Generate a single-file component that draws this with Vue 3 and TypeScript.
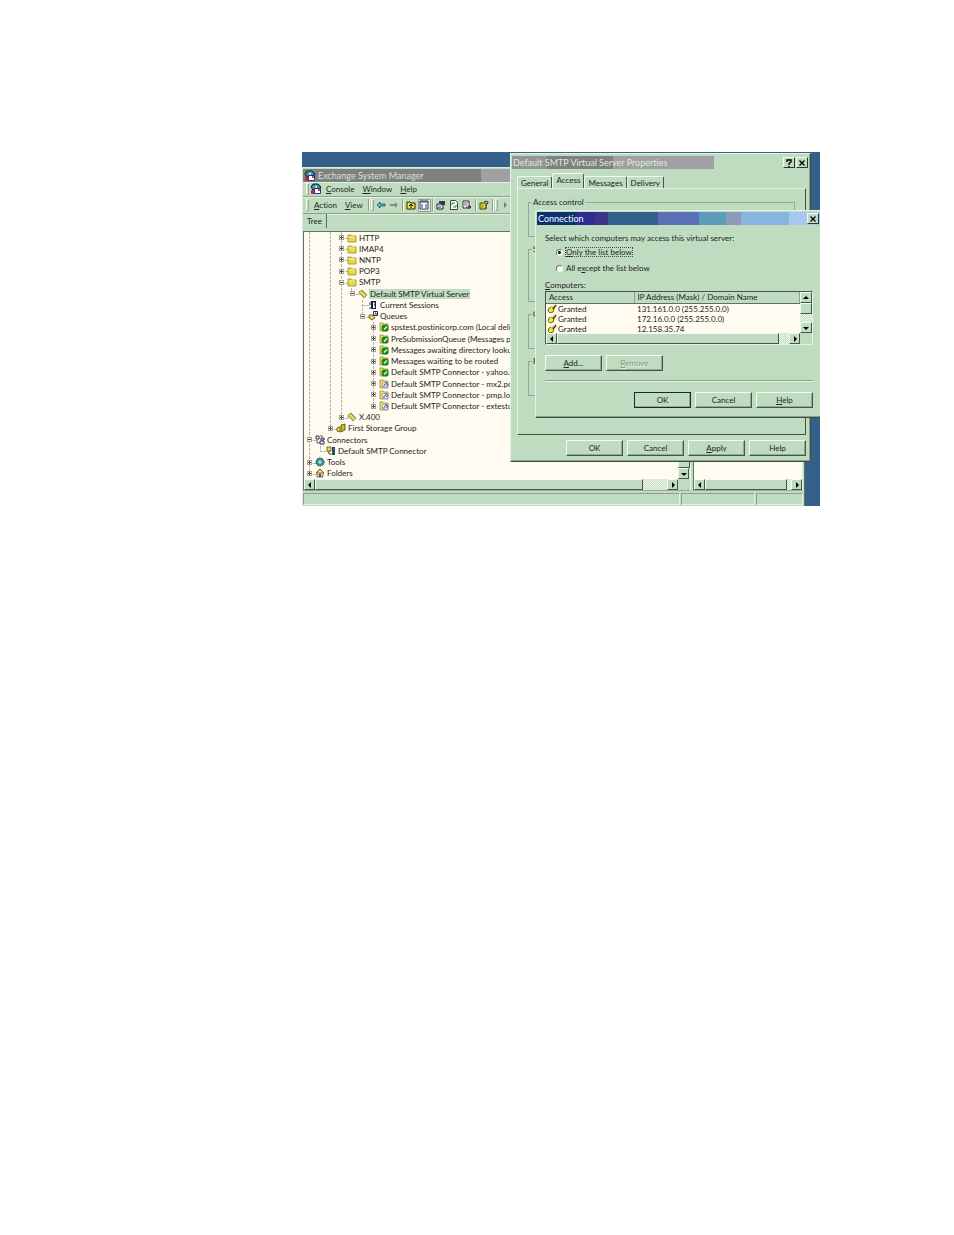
<script setup lang="ts">
import { ref } from 'vue'

type Toggle = 'plus' | 'minus' | ''
interface TreeNode {
  label: string
  level: number
  toggle: Toggle
  icon: string
  selected?: boolean
}

const nodes: TreeNode[] = [
  { label: 'HTTP', level: 3, toggle: 'plus', icon: 'folder' },
  { label: 'IMAP4', level: 3, toggle: 'plus', icon: 'folder' },
  { label: 'NNTP', level: 3, toggle: 'plus', icon: 'folder' },
  { label: 'POP3', level: 3, toggle: 'plus', icon: 'folder' },
  { label: 'SMTP', level: 3, toggle: 'minus', icon: 'folder' },
  { label: 'Default SMTP Virtual Server', level: 4, toggle: 'minus', icon: 'server', selected: true },
  { label: 'Current Sessions', level: 5, toggle: '', icon: 'session' },
  { label: 'Queues', level: 5, toggle: 'minus', icon: 'queues' },
  { label: 'spstest.postinicorp.com (Local delivery)', level: 6, toggle: 'plus', icon: 'queue-ok' },
  { label: 'PreSubmissionQueue (Messages pending)', level: 6, toggle: 'plus', icon: 'queue-ok' },
  { label: 'Messages awaiting directory lookup', level: 6, toggle: 'plus', icon: 'queue-ok' },
  { label: 'Messages waiting to be routed', level: 6, toggle: 'plus', icon: 'queue-ok' },
  { label: 'Default SMTP Connector - yahoo.com', level: 6, toggle: 'plus', icon: 'queue-ok' },
  { label: 'Default SMTP Connector - mx2.postini.com', level: 6, toggle: 'plus', icon: 'queue-retry' },
  { label: 'Default SMTP Connector - pmp.local', level: 6, toggle: 'plus', icon: 'queue-retry' },
  { label: 'Default SMTP Connector - extestuite', level: 6, toggle: 'plus', icon: 'queue-retry' },
  { label: 'X.400', level: 3, toggle: 'plus', icon: 'server' },
  { label: 'First Storage Group', level: 2, toggle: 'plus', icon: 'storage' },
  { label: 'Connectors', level: 0, toggle: 'minus', icon: 'connectors' },
  { label: 'Default SMTP Connector', level: 1, toggle: '', icon: 'connector' },
  { label: 'Tools', level: 0, toggle: 'plus', icon: 'tools' },
  { label: 'Folders', level: 0, toggle: 'plus', icon: 'home' },
]

const indent = (level: number) => ({ paddingLeft: `${2 + Math.round((level * 32) / 3)}px` })

const tabs = ['General', 'Access', 'Messages', 'Delivery']
const activeTab = ref('Access')
const mode = ref('only')

const rules = [
  { access: 'Granted', address: '131.161.0.0 (255.255.0.0)' },
  { access: 'Granted', address: '172.16.0.0 (255.255.0.0)' },
  { access: 'Granted', address: '12.158.35.74' },
]
</script>

<template>
  <svg class="sprites" aria-hidden="true">
    <symbol id="i-folder" viewBox="0 0 10 10">
      <path d="M1 3V2h3l1 1h4v6H1z" fill="#e8d848" stroke="#98903c" stroke-width=".8" />
      <path d="M2 4h6" stroke="#fff890" />
    </symbol>
    <symbol id="i-server" viewBox="0 0 10 10">
      <path d="M1 3l3-2 5 5-3 3z" fill="#e8d860" stroke="#807838" stroke-width=".8" />
      <path d="M0 5h3l3 3M4 2l4 4" fill="none" stroke="#98947c" stroke-width=".8" />
    </symbol>
    <symbol id="i-session" viewBox="0 0 10 10">
      <path d="M3 1h5v8H3z" fill="#181840" />
      <path d="M5 2l2 1-1 2 1 1v2H5z" fill="#fff" />
      <path d="M2 2v3M1 8h3" stroke="#303878" />
    </symbol>
    <symbol id="i-queues" viewBox="0 0 10 10">
      <path d="M5.500.5h4v4h-4z" fill="#fff" stroke="#202070" />
      <path d="M1 4h4l2 3-3 2-3-2z" fill="#e0d450" stroke="#50501c" stroke-width=".8" />
      <path d="M7 2h1v2" stroke="#202070" fill="none" />
    </symbol>
    <symbol id="i-queue-ok" viewBox="0 0 10 10">
      <path d="M1 3V1h3l1 1h4v7H1z" fill="#ecdc58" stroke="#98903c" stroke-width=".8" />
      <path d="M4 3h4l1 1v4l-1 1H4L3 8V4z" fill="#189020" stroke="#106818" stroke-width=".6" />
      <path d="M5 7.500l3-3" stroke="#e8ffe0" stroke-width="1.200" />
    </symbol>
    <symbol id="i-queue-retry" viewBox="0 0 10 10">
      <path d="M1 3V1h3l1 1h4v7H1z" fill="#ecdc58" stroke="#98903c" stroke-width=".8" />
      <path d="M3.500 3.500h5v5h-5z" fill="#fff" stroke="#a0a4b8" />
      <path d="M5 8V6l2-1V3.500L9 5.500 7 7" fill="none" stroke="#2838b8" stroke-width=".9" />
    </symbol>
    <symbol id="i-storage" viewBox="0 0 10 10">
      <path d="M1 5l3-1v5l-3-1z" fill="#f0e838" stroke="#484810" stroke-width=".8" />
      <path d="M5 2l4-1v6l-4 2z" fill="#c8bc20" stroke="#484810" stroke-width=".8" />
    </symbol>
    <symbol id="i-connectors" viewBox="0 0 10 10">
      <path d="M1 1h3v3H1zM6 3h3v2H6zM5 6h4v3H5z" fill="#fff" stroke="#282848" />
      <path d="M2 5v3h3M5 1h3" fill="none" stroke="#904080" />
    </symbol>
    <symbol id="i-connector" viewBox="0 0 10 10">
      <path d="M1 1h4v4H1z" fill="#f0e040" stroke="#505010" stroke-width=".8" />
      <path d="M6 1h3v8H6z" fill="#304878" />
      <path d="M2 6l3 3M7 3h1" stroke="#308888" />
      <path d="M3 5v3h3" fill="none" stroke="#807818" />
    </symbol>
    <symbol id="i-tools" viewBox="0 0 10 10">
      <circle cx="5" cy="5" r="4" fill="#389098" stroke="#183840" stroke-dasharray="1.500 1" />
      <path d="M5 3v4M3 5h4" stroke="#c8f0f0" />
    </symbol>
    <symbol id="i-home" viewBox="0 0 10 10">
      <path d="M1 5l4-4 4 4" fill="#f0e480" stroke="#584838" />
      <path d="M2 5h6v4H2z" fill="#e8d8b0" stroke="#605038" stroke-width=".8" />
      <path d="M4 6h2v3H4z" fill="#684858" />
    </symbol>
    <symbol id="i-app" viewBox="0 0 12 12">
      <path d="M3 1h5l3 3-2 3H3L1 4z" fill="#289090" stroke="#102838" />
      <path d="M4 4l3-2v3z" fill="#e8e8d0" />
      <path d="M1 7h4v4H1z" fill="#b03048" />
      <path d="M4.500 5.500h6v5h-6z" fill="#fff" stroke="#283098" />
      <path d="M8 6h2v2H8z" fill="#d04050" />
    </symbol>
    <symbol id="i-key" viewBox="0 0 10 10">
      <path d="M2 4l3-1 2 2-1 3-3 1-2-2z" fill="#f0e838" stroke="#484810" stroke-width=".8" />
      <path d="M6 5l3-4" stroke="#302c10" stroke-width="1.500" />
      <path d="M4 4l4-3" stroke="#e8d830" stroke-width="1.500" />
    </symbol>
    <symbol id="i-up" viewBox="0 0 10 10">
      <path d="M1 2h3l1 1h4v6H1z" fill="#f0e040" stroke="#282808" />
      <path d="M5 8V4M3 6l2-2 2 2" fill="none" stroke="#101010" />
    </symbol>
    <symbol id="i-pane" viewBox="0 0 10 10">
      <path d="M1 1h8v8H1z" fill="#fff" stroke="#303070" />
      <path d="M1 2h8M2 5h2M2 7h2M6 5h2M6 7h2" stroke="#303070" />
    </symbol>
    <symbol id="i-props" viewBox="0 0 10 10">
      <path d="M1 4h6v5H1z" fill="#fff" stroke="#202020" />
      <path d="M3 1h6v4H6L3 3z" fill="#303860" />
      <path d="M2 6h4M2 7.500h3" stroke="#606060" stroke-width=".8" />
    </symbol>
    <symbol id="i-refresh" viewBox="0 0 10 10">
      <path d="M1.500.5h5l2 2v7h-7z" fill="#fff" stroke="#404040" />
      <path d="M3 5V3h3M7 5v2H4" fill="none" stroke="#108828" />
    </symbol>
    <symbol id="i-export" viewBox="0 0 10 10">
      <path d="M1 1h6v7H1z" fill="#fff" stroke="#383838" />
      <path d="M2 3h4M2 5h3" stroke="#606060" />
      <path d="M4 7h4M7 5l2 2-2 2" fill="none" stroke="#302840" />
    </symbol>
    <symbol id="i-help" viewBox="0 0 10 10">
      <path d="M1 3h6v6H1z" fill="#f0e040" stroke="#404010" />
      <path d="M2 5h3M2 7h3" stroke="#807818" stroke-width=".8" />
      <path d="M5 2l2-1 2 1v1L7 5v1M7 7v1.500" fill="none" stroke="#303030" />
    </symbol>
    <symbol id="i-back" viewBox="0 0 10 10">
      <path d="M1 5l3-3v2h5v2H4v2z" fill="#40d0d8" stroke="#184858" stroke-width=".8" />
    </symbol>
    <symbol id="i-forward" viewBox="0 0 10 10">
      <path d="M9 5L6 2v2H1v2h5v2z" fill="#808c80" />
    </symbol>
    <symbol id="i-left" viewBox="0 0 10 10"><path d="M6 2v6L3 5z" /></symbol>
    <symbol id="i-right" viewBox="0 0 10 10"><path d="M4 2v6l3-3z" /></symbol>
    <symbol id="i-arrow-up" viewBox="0 0 10 10"><path d="M2 6h6L5 3z" /></symbol>
    <symbol id="i-arrow-down" viewBox="0 0 10 10"><path d="M2 4h6L5 7z" /></symbol>
    <symbol id="i-close" viewBox="0 0 10 10">
      <path d="M2.500 2.500l5 5M7.500 2.500l-5 5" stroke="#000" stroke-width="1.200" />
    </symbol>
    <symbol id="i-question" viewBox="0 0 10 10">
      <path d="M3 4V2h4v2L5 5.500V7M5 8v1.200" fill="none" stroke="#000" stroke-width="1.400" />
    </symbol>
  </svg>

  <main class="page">
    <div class="desktop">
      <section class="manager" aria-label="Exchange System Manager">
        <header class="manager-title">
          <svg class="app-icon"><use href="#i-app" /></svg>
          <span>Exchange System Manager</span>
        </header>
        <nav class="menubar">
          <i class="grip"></i>
          <svg class="app-icon"><use href="#i-app" /></svg>
          <button class="menu"><u>C</u>onsole</button>
          <button class="menu"><u>W</u>indow</button>
          <button class="menu"><u>H</u>elp</button>
        </nav>
        <div class="toolbar">
          <i class="grip"></i>
          <button class="menu"><u>A</u>ction</button>
          <button class="menu"><u>V</u>iew</button>
          <i class="sep"></i><i class="grip"></i>
          <button class="tool" aria-label="Back"><svg class="icon"><use href="#i-back" /></svg></button>
          <button class="tool" aria-label="Forward"><svg class="icon"><use href="#i-forward" /></svg></button>
          <i class="sep"></i>
          <button class="tool" aria-label="Up"><svg class="icon"><use href="#i-up" /></svg></button>
          <button class="tool pressed" aria-label="Show tree"><svg class="icon"><use href="#i-pane" /></svg></button>
          <i class="sep"></i>
          <button class="tool" aria-label="Properties"><svg class="icon"><use href="#i-props" /></svg></button>
          <button class="tool" aria-label="Refresh"><svg class="icon"><use href="#i-refresh" /></svg></button>
          <button class="tool" aria-label="Export"><svg class="icon"><use href="#i-export" /></svg></button>
          <i class="sep"></i>
          <button class="tool" aria-label="Help"><svg class="icon"><use href="#i-help" /></svg></button>
          <i class="sep"></i><i class="grip"></i>
          <button class="tool dim" aria-label="Start"><svg class="icon"><use href="#i-right" /></svg></button>
        </div>
        <div class="tree-tabs"><button class="tree-tab">Tree</button></div>

        <div class="panes">
          <div class="pane">
            <div class="pane-body">
              <div class="tree-wrap">
                <svg class="guides" aria-hidden="true">
                  <path d="M5.500 0V242M26.500 0V197M37.500 0V185M47.500 56V62M58.500 68V84M58.500 73.500h7M69.500 90V174M16.500 214V219.500h9" />
                  <path d="M5.500 208.500h8M5.500 231.500h8M5.500 242.500h8M26.500 197.500h8M37.500 6.500h8M37.500 17.500h8M37.500 28.500h8M37.500 39.500h8M37.500 51.500h8M37.500 186.500h8M47.500 62.500h8M58.500 85.500h8" />
                </svg>
                <ul class="tree">
                  <li v-for="(n, i) in nodes" :key="i" class="node" :style="indent(n.level)">
                    <svg class="toggle" viewBox="0 0 7 7">
                      <template v-if="n.toggle">
                        <rect x="1.500" y="1.500" width="4" height="4" fill="#fffbf0" stroke="#a4a49c" />
                        <path :d="n.toggle === 'plus' ? 'M2 3.500h3M3.500 2v3' : 'M2 3.500h3'" stroke="#484848" />
                      </template>
                    </svg>
                    <svg class="icon"><use :href="`#i-${n.icon}`" /></svg>
                    <span class="label" :class="{ selected: n.selected }">{{ n.label }}</span>
                  </li>
                </ul>
              </div>
              <div class="vscroll">
                <div class="vthumb"></div>
                <button class="arrow" aria-label="Scroll down"><svg class="icon"><use href="#i-arrow-down" /></svg></button>
              </div>
            </div>
            <div class="hscroll with-corner">
              <button class="arrow" aria-label="Scroll left"><svg class="icon"><use href="#i-left" /></svg></button>
              <div class="hthumb"></div>
              <div class="track wide"></div>
              <button class="arrow" aria-label="Scroll right"><svg class="icon"><use href="#i-right" /></svg></button>
            </div>
          </div>
          <div class="pane">
            <div class="pane-body"></div>
            <div class="hscroll">
              <button class="arrow" aria-label="Scroll left"><svg class="icon"><use href="#i-left" /></svg></button>
              <div class="hthumb"></div>
              <div class="track thin"></div>
              <button class="arrow" aria-label="Scroll right"><svg class="icon"><use href="#i-right" /></svg></button>
            </div>
          </div>
        </div>
        <footer class="status"><span></span><span></span><span></span></footer>
      </section>

      <section class="dialog props" aria-label="Default SMTP Virtual Server Properties">
        <header class="dialog-title props-title">
          <span>Default SMTP Virtual Server Properties</span>
          <button class="caption" aria-label="What's this"><svg class="icon"><use href="#i-question" /></svg></button>
          <button class="caption" aria-label="Close"><svg class="icon"><use href="#i-close" /></svg></button>
        </header>
        <div class="tabs" role="tablist">
          <button
            v-for="t in tabs"
            :key="t"
            class="tab"
            :class="{ active: t === activeTab }"
            role="tab"
            :aria-selected="t === activeTab"
            @click="activeTab = t"
          >{{ t }}</button>
        </div>
        <div class="tab-panel">
          <fieldset class="group"><legend>Access control</legend></fieldset>
          <fieldset class="group tall"><legend>Secure communication</legend></fieldset>
          <fieldset class="group"><legend>Connection control</legend></fieldset>
          <fieldset class="group"><legend>Relay restrictions</legend></fieldset>
        </div>
        <div class="actions props-actions">
          <button class="btn">OK</button>
          <button class="btn">Cancel</button>
          <button class="btn"><u>A</u>pply</button>
          <button class="btn">Help</button>
        </div>
      </section>

      <section class="dialog connection" aria-label="Connection">
        <header class="dialog-title connection-title">
          <span>Connection</span>
          <button class="caption" aria-label="Close"><svg class="icon"><use href="#i-close" /></svg></button>
        </header>
        <form class="connection-body" @submit.prevent>
          <p class="prompt">Select which computers may access this virtual server:</p>
          <label class="choice">
            <input v-model="mode" type="radio" name="mode" value="only" />
            <span class="focused"><u>O</u>nly the list below</span>
          </label>
          <label class="choice second">
            <input v-model="mode" type="radio" name="mode" value="except" />
            <span>All e<u>x</u>cept the list below</span>
          </label>
          <p id="computers" class="list-label"><u>C</u>omputers:</p>
          <div class="list">
            <div class="list-main">
              <table aria-labelledby="computers">
                <thead>
                  <tr><th class="col-access">Access</th><th>IP Address (Mask) / Domain Name</th></tr>
                </thead>
                <tbody>
                  <tr v-for="r in rules" :key="r.address">
                    <td><span class="cell"><svg class="icon"><use href="#i-key" /></svg>{{ r.access }}</span></td>
                    <td>{{ r.address }}</td>
                  </tr>
                </tbody>
              </table>
              <div class="list-vscroll">
                <button type="button" class="arrow" aria-label="Scroll up"><svg class="icon"><use href="#i-arrow-up" /></svg></button>
                <div class="vthumb"></div>
                <div class="track fill"></div>
                <button type="button" class="arrow" aria-label="Scroll down"><svg class="icon"><use href="#i-arrow-down" /></svg></button>
              </div>
            </div>
            <div class="hscroll with-corner">
              <button type="button" class="arrow" aria-label="Scroll left"><svg class="icon"><use href="#i-left" /></svg></button>
              <div class="hthumb"></div>
              <div class="track short"></div>
              <button type="button" class="arrow" aria-label="Scroll right"><svg class="icon"><use href="#i-right" /></svg></button>
            </div>
          </div>
          <div class="actions edit-actions">
            <button type="button" class="btn"><u>A</u>dd...</button>
            <button type="button" class="btn" disabled><u>R</u>emove</button>
          </div>
          <hr class="rule" />
          <div class="actions">
            <button class="btn default">OK</button>
            <button type="button" class="btn">Cancel</button>
            <button type="button" class="btn"><u>H</u>elp</button>
          </div>
        </form>
      </section>
    </div>
  </main>
</template>

<style>
body {
  background: #fff;
}
</style>

<style scoped>
* {
  box-sizing: border-box;
}
.page {
  padding: 152px 134px 0 302px;
  font: 8px/10px Lato, Tahoma, sans-serif;
  font-variant-ligatures: none;
  color: #1c241c;
}
.sprites {
  position: absolute;
  width: 0;
  height: 0;
}
button {
  font: inherit;
  font-variant-ligatures: none;
  color: inherit;
  background: #c0dcc0;
  border: 0;
  padding: 0;
  margin: 0;
}
p {
  margin: 0;
}
.icon {
  width: 10px;
  height: 10px;
  flex: none;
  display: block;
}
.app-icon {
  width: 12px;
  height: 12px;
  flex: none;
}
.desktop {
  position: relative;
  overflow: hidden;
  background: #34608c;
  padding: 15px 15px 0 0;
}

/* Main window */
.manager {
  background: #c0dcc0;
  border: 1px solid #d8ecd4;
  border-bottom: 0;
  border-right-color: #607060;
  padding: 1px 1px 0 0;
}
.manager-title {
  display: flex;
  align-items: center;
  gap: 2px;
  height: 13px;
  padding-left: 1px;
  font-size: 9px;
  color: #d0e4d0;
  background: linear-gradient(90deg, #808080 178px, #a0a0a4 178px);
}
.menubar,
.toolbar {
  display: flex;
  align-items: center;
  height: 15px;
  padding-left: 3px;
  border-bottom: 1px solid #8ca08c;
  box-shadow: inset 0 1px #e4f4e0;
}
.toolbar {
  height: 17px;
}
.menu {
  padding: 0 4px;
}
.grip {
  width: 3px;
  height: 12px;
  margin-right: 1px;
  border: 1px solid #98ac98;
  border-left-color: #f0fbec;
  border-top-color: #f0fbec;
}
.sep {
  width: 2px;
  height: 12px;
  margin: 0 1px;
  border-left: 1px solid #8ca08c;
  border-right: 1px solid #f0fbec;
}
.tool {
  width: 13px;
  height: 13px;
  display: grid;
  place-items: center;
}
.pressed {
  background: #e0f0dc;
  border: 1px solid #8ca08c;
}
.dim {
  fill: #708070;
}
.tree-tabs {
  height: 17px;
  box-shadow: inset 0 1px #e4f4e0;
}
.tree-tab {
  height: 14px;
  padding: 0 4px;
  border-right: 1px solid #607060;
}
.panes {
  display: grid;
  grid-template-columns: 1fr 110px;
  gap: 2px;
}
.pane {
  display: flex;
  flex-direction: column;
  min-width: 0;
  border: 1px solid #687468;
  border-right-color: #e4f4e0;
  border-bottom-color: #98a898;
}
.pane-body {
  display: flex;
  flex: 1;
  background: #fffbf0;
}
.tree-wrap {
  position: relative;
  flex: 1;
  min-width: 0;
}
.guides {
  position: absolute;
  inset: 0;
  width: 100%;
  height: 100%;
  fill: none;
  stroke: #b4b4ac;
  stroke-dasharray: 3 1;
}
.tree {
  position: relative;
  height: 247px;
  margin: 0;
  padding: 0;
  list-style: none;
  display: flex;
  flex-direction: column;
  justify-content: space-between;
  overflow: hidden;
}
.node {
  display: flex;
  align-items: center;
  height: 11px;
  white-space: nowrap;
}
.toggle {
  width: 7px;
  height: 7px;
  margin-right: 2px;
  flex: none;
}
.label {
  padding: 0 1px;
  margin-left: 1px;
}
.selected {
  background: #c0dcc0;
}
.vscroll {
  width: 12px;
  display: flex;
  flex-direction: column;
  justify-content: flex-end;
  background: #e4ece0;
}
.arrow,
.vthumb,
.hthumb {
  background: #c0dcc0;
  border: 1px solid #f0fbec;
  border-right-color: #485448;
  border-bottom-color: #485448;
}
.arrow {
  width: 11px;
  height: 11px;
  display: grid;
  place-items: center;
  flex: none;
}
.vthumb {
  height: 11px;
}
.hthumb {
  flex: 1;
}
.hscroll {
  display: flex;
  height: 11px;
  background: #c0dcc0;
}
.with-corner {
  padding-right: 12px;
}
.track {
  background: repeating-conic-gradient(#c0dcc0 0 25%, #f4f8ec 0 50%) 0 0 / 2px 2px;
}
.wide {
  width: 24px;
}
.short {
  width: 10px;
}
.thin {
  width: 4px;
}
.fill {
  flex: 1;
}
.status {
  display: grid;
  grid-template-columns: 1fr 74px 47px;
  gap: 1px;
  height: 15px;
  padding: 2px 0 1px;
}
.status span {
  border: 1px solid #8ca08c;
  border-right-color: #e4f4e0;
  border-bottom-color: #e4f4e0;
}

/* Dialogs */
.dialog {
  position: absolute;
  background: #c0dcc0;
  border: 1px solid #e4f4e0;
  border-right-color: #405040;
  border-bottom-color: #405040;
  box-shadow: inset -1px -1px #8ca08c;
}
.dialog-title {
  display: flex;
  align-items: center;
  gap: 1px;
  height: 13px;
  padding: 0 1px;
  font-size: 9px;
}
.dialog-title span {
  flex: 1;
}
.caption {
  width: 12px;
  height: 11px;
  display: grid;
  place-items: center;
  border: 1px solid #f0fbec;
  border-right-color: #303830;
  border-bottom-color: #303830;
}
.props {
  left: 208px;
  top: 1px;
  width: 301px;
  padding: 2px 4px 5px 6px;
}
.props-title {
  margin: 0 -3px 0 -5px;
  color: #dcecdc;
  background: linear-gradient(90deg, #949494 35px, #808080 35px 101px, #a0a0a4 101px 202px, #c0dcc0 202px);
}
.tabs {
  display: flex;
  align-items: flex-end;
  height: 19px;
}
.tab {
  height: 12px;
  padding: 0 3px;
  border: 1px solid #f0fbec;
  border-bottom: 0;
  border-right-color: #485448;
  border-radius: 2px 2px 0 0;
}
.active {
  height: 15px;
  padding-bottom: 2px;
}
.tab-panel {
  height: 247px;
  padding: 8px 10px;
  border: 1px solid #e4f4e0;
  border-right-color: #405040;
  border-bottom-color: #405040;
}
.group {
  height: 40px;
  margin: 0 0 7px;
  padding: 0 3px;
  border: 1px solid #94a894;
}
.group legend {
  padding: 0 1px;
}
.tall {
  height: 58px;
}
.actions {
  display: flex;
  justify-content: flex-end;
  gap: 4px;
}
.props-actions {
  margin-top: 5px;
}
.btn {
  width: 57px;
  height: 16px;
  border: 1px solid #f0fbec;
  border-right-color: #485448;
  border-bottom-color: #485448;
  box-shadow: inset -1px -1px #94a894;
}
.btn:disabled {
  color: #849484;
  text-shadow: 1px 1px #e4f4e0;
}
.default {
  border-color: #202820;
}
.connection {
  left: 233px;
  top: 58px;
  width: 288px;
  padding: 1px 1px 9px;
}
.connection-title {
  padding-right: 2px;
  color: #fff;
  background: linear-gradient(90deg, #0c3070 40px, #2c2c94 40px 58px, #3c3488 58px 71px, #34608c 71px 121px, #5c70b8 121px 162px, #5c9cb8 162px 189px, #8c9cb8 189px 204px, #88b4e0 204px 252px, #a4c8f0 252px);
}
.connection-body {
  padding: 8px 8px 0;
}
.choice {
  display: flex;
  align-items: center;
  height: 10px;
  margin: 4px 0 0 11px;
  gap: 2px;
}
.second {
  margin-top: 6px;
}
.choice input {
  appearance: none;
  width: 7px;
  height: 7px;
  margin: 0;
  border: 1px solid #687468;
  border-right-color: #f0fbec;
  border-bottom-color: #f0fbec;
  border-radius: 50%;
  background: #fffbf0;
}
.choice input:checked {
  background: radial-gradient(circle, #101010 1px, #fffbf0 2px);
}
.choice span {
  padding: 0 1px;
}
.focused {
  outline: 1px dotted #405040;
  outline-offset: -1px;
}
.list-label {
  margin-top: 7px;
}
.list {
  margin-top: 1px;
  border: 1px solid #485448;
  border-right-color: #e4f4e0;
  border-bottom-color: #e4f4e0;
  background: #fffbf0;
}
.list-main {
  display: flex;
  height: 41px;
}
table {
  flex: 1;
  border-collapse: collapse;
  table-layout: fixed;
}
th {
  height: 11px;
  padding: 0 3px;
  text-align: left;
  font-weight: normal;
  background: #c0dcc0;
  border-right: 1px solid #8ca08c;
  border-bottom: 1px solid #607060;
}
.col-access {
  width: 88px;
}
td {
  height: 10px;
  padding: 0 3px;
}
.cell {
  display: flex;
  gap: 1px;
  margin-left: -2px;
}
.list-vscroll {
  width: 12px;
  display: flex;
  flex-direction: column;
}
.list-vscroll .arrow {
  width: 12px;
}
.edit-actions {
  justify-content: flex-start;
  margin-top: 10px;
}
.rule {
  height: 2px;
  margin: 9px 0 10px;
  border: 0;
  border-top: 1px solid #8ca08c;
  border-bottom: 1px solid #e4f4e0;
}
</style>
